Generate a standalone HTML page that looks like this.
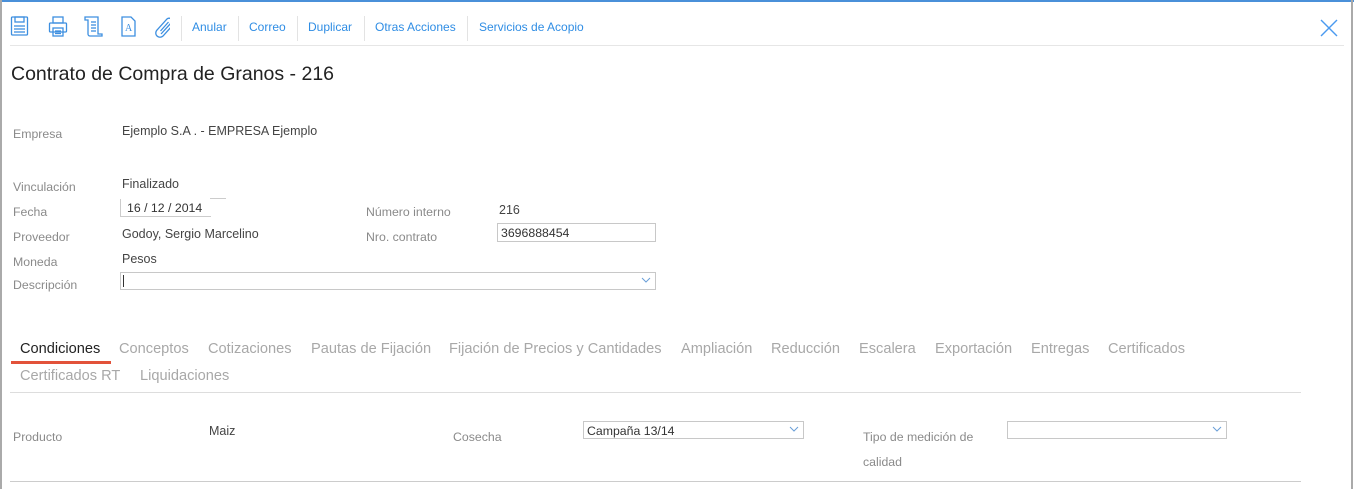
<!DOCTYPE html>
<html><head><meta charset="utf-8"><style>
*{margin:0;padding:0;box-sizing:border-box}
body{width:1354px;height:489px;background:#fff;font-family:"Liberation Sans",sans-serif;position:relative;overflow:hidden}
.a{position:absolute;white-space:nowrap}
.lb{font-size:12.3px;color:#8a8a8a}
.v{font-size:12.5px;color:#444}
.tb{font-size:12px;color:#2f8de4;top:20px}
.sep{position:absolute;top:16px;width:1px;height:25px;background:#e3e3e3}
.tab{font-size:14.6px;color:#a8a8a8}
.inp{position:absolute;border:1px solid #c8c8c8;background:#fff;font-size:12.3px;color:#333;padding:2px 3px}
.chev{position:absolute;right:4px;top:2px}
</style></head><body>
<div class="a" style="left:0;top:0;width:1354px;height:2px;background:#4a90d9"></div>
<div class="a" style="left:0;top:0;width:2px;height:489px;background:#aaa"></div>
<div class="a" style="left:1351px;top:0;width:2px;height:489px;background:#aaa"></div>

<svg class="a" style="left:10px;top:15px" width="160" height="24" fill="none" stroke="#3d8fe0" stroke-width="1.3">
<rect x="1.5" y="2" width="16" height="18" rx="1"/><rect x="5" y="2" width="9" height="5"/><line x1="4" y1="11" x2="15" y2="11"/><line x1="4" y1="14" x2="15" y2="14"/><line x1="4" y1="17" x2="15" y2="17"/>
<g transform="translate(38,0)"><rect x="5" y="2" width="10" height="6"/><rect x="1.5" y="8" width="17" height="9" rx="1"/><rect x="5" y="13" width="10" height="8"/><line x1="7" y1="16" x2="13" y2="16"/><line x1="7" y1="18.5" x2="13" y2="18.5"/></g>
<g transform="translate(73,0)"><path d="M3 2h12v17h4v2H7a2 2 0 0 1-2-2V5H2V2z"/><line x1="8" y1="7" x2="13" y2="7"/><line x1="8" y1="10" x2="13" y2="10"/><line x1="8" y1="13" x2="13" y2="13"/><line x1="8" y1="16" x2="13" y2="16"/></g>
<g transform="translate(110,0)"><path d="M2 2h9l4 4v15H2z"/><text x="5" y="16" font-size="10" font-family="Liberation Serif" fill="#3d8fe0" stroke="none">A</text></g>
<g transform="translate(144,0)"><path d="M7 19l10-11a2.8 2.8 0 0 0-4-4L3 15a4 4 0 0 0 6 6l9-10M6.5 16l8-9"/></g>
</svg>
<div class="sep" style="left:181px"></div>
<div class="a tb" style="left:192px">Anular</div>
<div class="sep" style="left:238px"></div>
<div class="a tb" style="left:249px">Correo</div>
<div class="sep" style="left:297px"></div>
<div class="a tb" style="left:308px">Duplicar</div>
<div class="sep" style="left:364px"></div>
<div class="a tb" style="left:375px">Otras Acciones</div>
<div class="sep" style="left:467px"></div>
<div class="a tb" style="left:479px">Servicios de Acopio</div>
<svg class="a" style="left:1320px;top:19px" width="18" height="18" stroke="#4a9af0" stroke-width="1.4"><line x1="1" y1="1" x2="17" y2="17"/><line x1="17" y1="1" x2="1" y2="17"/></svg>
<div class="a" style="left:10px;top:45px;width:1334px;height:1px;background:#e6e6e6"></div>

<div class="a" style="left:11px;top:63px;font-size:19.5px;color:#222">Contrato de Compra de Granos - 216</div>

<div class="a lb" style="left:13px;top:127px">Empresa</div>
<div class="a v" style="left:122px;top:124px">Ejemplo S.A . - EMPRESA Ejemplo</div>
<div class="a lb" style="left:13px;top:180px">Vinculación</div>
<div class="a v" style="left:122px;top:177px">Finalizado</div>
<div class="a lb" style="left:13px;top:205px">Fecha</div>
<div class="a" style="left:120px;top:199px;width:91px;height:18px;border-left:1px solid #ccc;border-bottom:1px solid #ccc;font-size:12.3px;color:#333;padding:2px 0 0 6px">16 / 12 / 2014</div>
<div class="a" style="left:210px;top:198px;width:16px;height:1px;background:#ccc"></div>
<div class="a lb" style="left:13px;top:230px">Proveedor</div>
<div class="a v" style="left:122px;top:227px">Godoy, Sergio Marcelino</div>
<div class="a lb" style="left:13px;top:255px">Moneda</div>
<div class="a v" style="left:122px;top:252px">Pesos</div>
<div class="a lb" style="left:13px;top:278px">Descripción</div>
<div class="inp" style="left:120px;top:272px;width:536px;height:18px"><span style="display:inline-block;width:1px;height:12px;background:#333;margin-left:-1px"></span><svg class="chev" width="10" height="10" stroke="#6a9fd8" fill="none"><path d="M1 3l4 4 4-4"/></svg></div>
<div class="a lb" style="left:366px;top:205px">Número interno</div>
<div class="a v" style="left:499px;top:203px">216</div>
<div class="a lb" style="left:366px;top:230px">Nro. contrato</div>
<div class="inp" style="left:497px;top:223px;width:159px;height:19px">3696888454</div>

<div class="a tab" style="left:20px;top:341px;color:#222">Condiciones</div>
<div class="a" style="left:11px;top:361px;width:100px;height:3px;background:#e2523a"></div>
<div class="a tab" style="left:119px;top:341px">Conceptos</div>
<div class="a tab" style="left:208px;top:341px">Cotizaciones</div>
<div class="a tab" style="left:311px;top:341px">Pautas de Fijación</div>
<div class="a tab" style="left:449px;top:341px">Fijación de Precios y Cantidades</div>
<div class="a tab" style="left:681px;top:341px">Ampliación</div>
<div class="a tab" style="left:771px;top:341px">Reducción</div>
<div class="a tab" style="left:859px;top:341px">Escalera</div>
<div class="a tab" style="left:935px;top:341px">Exportación</div>
<div class="a tab" style="left:1031px;top:341px">Entregas</div>
<div class="a tab" style="left:1108px;top:341px">Certificados</div>
<div class="a tab" style="left:20px;top:368px">Certificados RT</div>
<div class="a tab" style="left:140px;top:368px">Liquidaciones</div>
<div class="a" style="left:10px;top:392px;width:1291px;height:1px;background:#ddd"></div>

<div class="a lb" style="left:13px;top:430px">Producto</div>
<div class="a v" style="left:209px;top:424px">Maiz</div>
<div class="a lb" style="left:453px;top:430px">Cosecha</div>
<div class="inp" style="left:583px;top:421px;width:221px;height:18px">Campaña 13/14<svg class="chev" width="10" height="10" stroke="#6a9fd8" fill="none"><path d="M1 3l4 4 4-4"/></svg></div>
<div class="a lb" style="left:863px;top:430px">Tipo de medición de</div>
<div class="a lb" style="left:863px;top:455px">calidad</div>
<div class="inp" style="left:1007px;top:421px;width:220px;height:18px"><svg class="chev" width="10" height="10" stroke="#6a9fd8" fill="none"><path d="M1 3l4 4 4-4"/></svg></div>
<div class="a" style="left:10px;top:481px;width:1291px;height:1px;background:#ccc"></div>
</body></html>
